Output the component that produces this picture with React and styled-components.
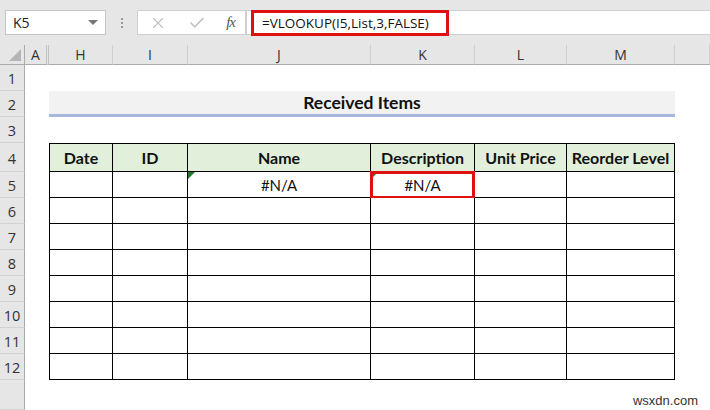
import React from "react";
import styled, { createGlobalStyle } from "styled-components";
import { X, Check } from "lucide-react";

const GlobalStyle = createGlobalStyle`
  html, body {
    margin: 0;
    padding: 0;
    background: #ffffff;
    overflow: hidden;
  }
  * {
    box-sizing: border-box;
  }
`;

const Page = styled.div`
  width: 710px;
  height: 410px;
  position: relative;
  background: #ffffff;
  font-family: "Open Sans", "Liberation Sans", sans-serif;
  overflow: hidden;
`;

const Toolbar = styled.div`
  height: 45px;
  background: #e6e6e6;
  display: flex;
  align-items: flex-start;
  padding: 10px 0 0 5px;
`;

const NameBox = styled.div`
  width: 101px;
  height: 25px;
  background: #ffffff;
  border: 1px solid #c6c6c6;
  display: flex;
  align-items: center;
  justify-content: space-between;
  padding: 0 7px 0 7px;
  font-size: 14px;
  color: #222;
`;

const DropArrow = styled.span`
  width: 0;
  height: 0;
  border-left: 5px solid transparent;
  border-right: 5px solid transparent;
  border-top: 5px solid #777;
`;

const Dots = styled.div`
  width: 31px;
  height: 25px;
  display: flex;
  flex-direction: column;
  align-items: center;
  justify-content: center;
  gap: 2px;

  span {
    width: 2px;
    height: 2px;
    background: #9a9a9a;
  }
`;

const FuncBox = styled.div`
  width: 109px;
  height: 25px;
  background: #ffffff;
  border: 1px solid #d0d0d0;
  display: flex;
  align-items: center;
  justify-content: space-between;
  padding: 0 10px 0 11px;
  color: #c0c0c0;
`;

const Fx = styled.span`
  font-family: "Liberation Serif", serif;
  font-style: italic;
  font-size: 15px;
  color: #555;
  letter-spacing: -1px;
`;

const FormulaInput = styled.div`
  flex: 1;
  height: 25px;
  background: #ffffff;
  border: 1px solid #d0d0d0;
  border-right: none;
  display: flex;
  align-items: flex-start;
  padding-left: 4px;
`;

const Highlight = styled.div`
  width: 198px;
  height: 26px;
  border: 3px solid #e01010;
  display: flex;
  align-items: center;
  padding-left: 8px;
  font-size: 13.5px;
  color: #111;
  margin-top: -1px;
`;

const Sheet = styled.div`
  display: grid;
  grid-template-columns: 25px 24px 64px 75px 183px 104px 92px 108px 1fr;
  grid-template-rows: 20px 26px 26px 26px 29px repeat(8, 26px) 1fr;
  height: 365px;
`;

const Corner = styled.div`
  background: #e6e6e6;
  border-right: 1px solid #ababab;
  border-bottom: 1px solid #ababab;
  position: relative;

  &::after {
    content: "";
    position: absolute;
    right: 3px;
    bottom: 3px;
    width: 0;
    height: 0;
    border-left: 12px solid transparent;
    border-bottom: 12px solid #b5b5b5;
  }
`;

const ColHead = styled.div`
  background: #e6e6e6;
  border-bottom: 1px solid #ababab;
  border-right: ${({ $hidden }) => ($hidden ? "3px double #c2c2c2" : "1px solid #cfcfcf")};
  display: flex;
  align-items: center;
  justify-content: center;
  font-size: 14px;
  color: #333;
`;

const RowHead = styled.div`
  background: #e6e6e6;
  border-right: 1px solid #ababab;
  border-bottom: 1px solid #d2d2d2;
  display: flex;
  align-items: center;
  justify-content: center;
  font-size: 14.5px;
  color: #333;
  padding-top: 2px;
`;

const Blank = styled.div`
  grid-column: ${({ $span }) => $span || "2 / 10"};
`;

const TitleBand = styled.div`
  grid-column: 3 / 9;
  background: #f2f2f2;
  border-bottom: 3px solid #a5b7db;
  display: flex;
  align-items: center;
  justify-content: center;
  font-family: "Lato", "Open Sans", sans-serif;
  font-weight: 700;
  font-size: 17.5px;
  color: #111;
`;

const Cell = styled.div`
  position: relative;
  border-right: 1px solid #000;
  border-bottom: 1px solid #000;
  border-left: ${({ $first }) => ($first ? "1px solid #000" : "none")};
  border-top: ${({ $head }) => ($head ? "1px solid #000" : "none")};
  background: ${({ $head }) => ($head ? "#e2efda" : "#ffffff")};
  display: flex;
  align-items: center;
  justify-content: center;
  font-family: "Lato", "Open Sans", sans-serif;
  font-size: ${({ $head }) => ($head ? "16px" : "15px")};
  font-weight: ${({ $head }) => ($head ? 700 : 400)};
  color: #111;

  &::before {
    content: "";
    display: ${({ $flag }) => ($flag ? "block" : "none")};
    position: absolute;
    left: 0;
    top: 0;
    width: 0;
    height: 0;
    border-top: 7px solid #1f7a2e;
    border-right: 7px solid transparent;
  }

  &::after {
    content: "";
    display: ${({ $selected }) => ($selected ? "block" : "none")};
    position: absolute;
    left: -1px;
    top: -1px;
    right: -1px;
    bottom: -2px;
    border: 3px solid #e01010;
  }
`;

const Watermark = styled.div`
  position: absolute;
  right: 12px;
  bottom: 2px;
  font-family: "Liberation Sans", sans-serif;
  font-size: 13px;
  color: #333;
`;

const columns = ["A", "H", "I", "J", "K", "L", "M", ""];
const headers = ["Date", "ID", "Name", "Description", "Unit Price", "Reorder Level"];
const bodyRows = [5, 6, 7, 8, 9, 10, 11, 12];

export default function App() {
  return (
    <Page>
      <GlobalStyle />
      <Toolbar>
        <NameBox>
          K5
          <DropArrow />
        </NameBox>
        <Dots>
          <span />
          <span />
          <span />
        </Dots>
        <FuncBox>
          <X size={18} strokeWidth={1.5} />
          <Check size={18} strokeWidth={2.2} />
          <Fx>fx</Fx>
        </FuncBox>
        <FormulaInput>
          <Highlight>=VLOOKUP(I5,List,3,FALSE)</Highlight>
        </FormulaInput>
      </Toolbar>

      <Sheet>
        <Corner />
        {columns.map((c, i) => (
          <ColHead key={i} $hidden={c === "A"}>
            {c}
          </ColHead>
        ))}

        <RowHead>1</RowHead>
        <Blank />

        <RowHead>2</RowHead>
        <Blank $span="2 / 3" />
        <TitleBand>Received Items</TitleBand>
        <Blank $span="9 / 10" />

        <RowHead>3</RowHead>
        <Blank />

        <RowHead>4</RowHead>
        <Blank $span="2 / 3" />
        {headers.map((h, i) => (
          <Cell key={h} $head $first={i === 0}>
            {h}
          </Cell>
        ))}
        <Blank $span="9 / 10" />

        {bodyRows.map((r) => (
          <React.Fragment key={r}>
            <RowHead>{r}</RowHead>
            <Blank $span="2 / 3" />
            {headers.map((h, i) => {
              const isName = r === 5 && i === 2;
              const isDesc = r === 5 && i === 3;
              return (
                <Cell key={h} $first={i === 0} $flag={isName || isDesc} $selected={isDesc}>
                  {isName || isDesc ? "#N/A" : ""}
                </Cell>
              );
            })}
            <Blank $span="9 / 10" />
          </React.Fragment>
        ))}

        <RowHead />
        <Blank />
      </Sheet>
      <Watermark>wsxdn.com</Watermark>
    </Page>
  );
}
